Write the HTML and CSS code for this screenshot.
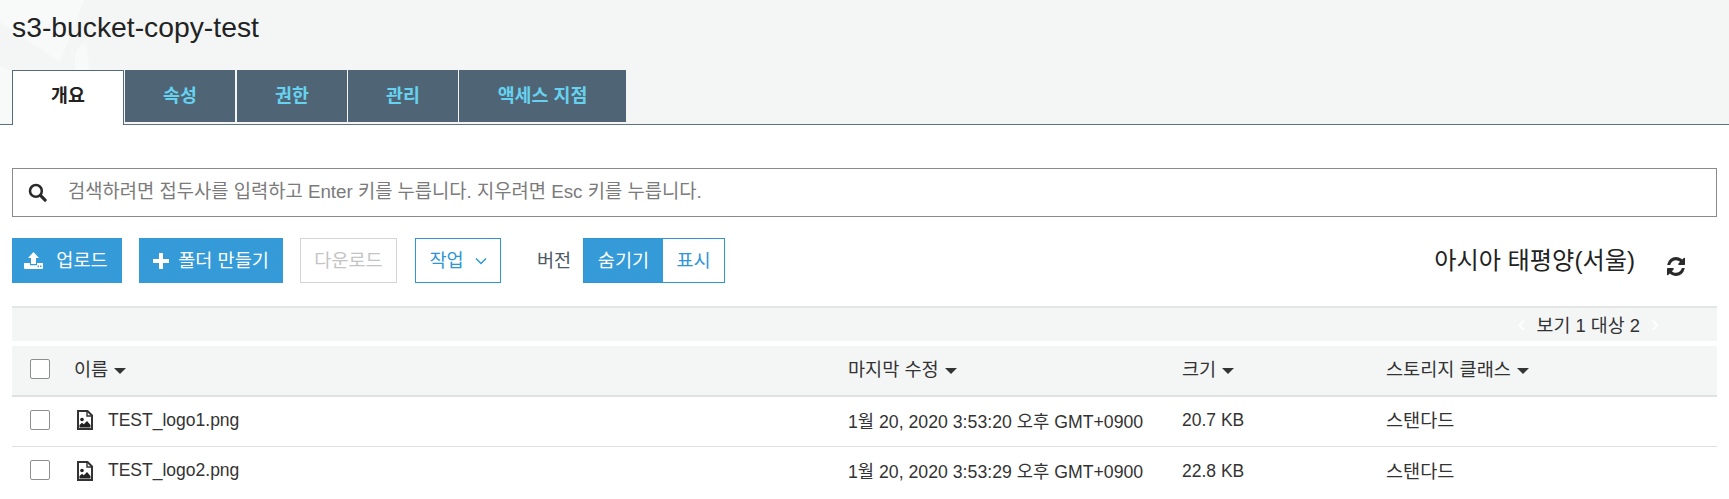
FILE: index.html
```html
<!DOCTYPE html>
<html lang="ko">
<head>
<meta charset="utf-8">
<title>s3-bucket-copy-test</title>
<link rel="stylesheet" href="styles.css">
</head>
<body>
<header class="head">
  <svg class="head-art" width="120" height="123" viewBox="0 0 120 123" aria-hidden="true"><path d="M0 0H84L60 62L0 22Z" fill="#f8fafa"/><path d="M75 123V62Q75 44 86 43Q92 66 84 123Z" fill="#f8fafa"/><path d="M0 66L40 84V123H0Z" fill="#f8fafa"/></svg>
  <h1 class="title">s3-bucket-copy-test</h1>
  <nav class="tabs">
    <a class="tab tab-active">개요</a>
    <a class="tab tab-second">속성</a>
    <a class="tab">권한</a>
    <a class="tab">관리</a>
    <a class="tab tab-wide">액세스 지점</a>
  </nav>
</header>
<main class="content">
  <div class="search">
    <svg class="search-icon" width="19" height="19" viewBox="0 0 18 18" aria-hidden="true"><circle cx="7.5" cy="7.5" r="5.6" fill="none" stroke="#2a2a2a" stroke-width="2.4"/><path d="M11.8 11.8L16.2 16.2" stroke="#2a2a2a" stroke-width="3" stroke-linecap="round"/></svg>
    <span class="search-text">검색하려면 접두사를 입력하고 Enter 키를 누릅니다. 지우려면 Esc 키를 누릅니다.</span>
  </div>
  <div class="toolbar">
    <button class="btn btn-primary btn-upload">
      <svg width="19" height="17" viewBox="0 0 19 17" aria-hidden="true"><path d="M9.5 0L15 6H12V12H7V6H4Z" fill="#fff"/><path d="M0 11H6V13.2H13V11H19V16Q19 17 18 17H1Q0 17 0 16Z" fill="#fff"/><path d="M13.6 13.6H15V15H13.6ZM16 13.6H17.4V15H16Z" fill="#349bd8"/></svg>
      <span>업로드</span>
    </button>
    <button class="btn btn-primary btn-folder">
      <svg width="16" height="16" viewBox="0 0 16 16" aria-hidden="true"><path d="M6 0H10V6H16V10H10V16H6V10H0V6H6Z" fill="#fff"/></svg>
      <span>폴더 만들기</span>
    </button>
    <button class="btn btn-disabled">다운로드</button>
    <button class="btn btn-outline btn-action">
      <span>작업</span>
      <svg width="12" height="8" viewBox="0 0 12 8" aria-hidden="true"><path d="M1 1.5L6 6.5L11 1.5" fill="none" stroke="#2f96d6" stroke-width="1.5"/></svg>
    </button>
    <span class="version-label">버전</span>
    <div class="segment">
      <span class="seg seg-on">숨기기</span>
      <span class="seg">표시</span>
    </div>
    <span class="region">아시아 태평양(서울)</span>
    <svg class="refresh" width="18" height="19" viewBox="0 0 1536 1536" preserveAspectRatio="none" aria-hidden="true"><path fill="#2a2a2a" d="M1511 928q0 5-1 7-64 268-268 434.5t-478 166.5q-146 0-282.5-55t-243.5-157l-129 129q-19 19-45 19t-45-19-19-45v-448q0-26 19-45t45-19h448q26 0 45 19t19 45-19 45l-137 137q71 66 161 102t187 36q134 0 250-65t186-179q11-17 53-117 8-23 30-23h192q13 0 22.5 9.5t9.5 22.5zm25-800v448q0 26-19 45t-45 19h-448q-26 0-45-19t-19-45 19-45l138-138q-148-137-349-137-134 0-250 65t-186 179q-11 17-53 117-8 23-30 23h-199q-13 0-22.5-9.5t-9.5-22.5v-7q65-268 270-434.5t480-166.5q146 0 284 55.5t245 156.5l130-129q19-19 45-19t45 19 19 45z"/></svg>
  </div>
  <div class="pager">
    <span class="pager-arrow">‹</span>
    <span>보기 1 대상 2</span>
    <span class="pager-arrow">›</span>
  </div>
  <div class="table">
    <div class="row row-head">
      <span class="check"></span>
      <span class="cell">이름<i class="caret"></i></span>
      <span class="cell">마지막 수정<i class="caret"></i></span>
      <span class="cell">크기<i class="caret"></i></span>
      <span class="cell">스토리지 클래스<i class="caret"></i></span>
    </div>
    <div class="row">
      <span class="check"></span>
      <span class="cell cell-name">
        <svg width="16" height="20" viewBox="0 0 16 20" aria-hidden="true"><path d="M1 1H10.5L15 5.5V19H1Z" fill="#fff" stroke="#333" stroke-width="2"/><path d="M10 1V6H15" fill="none" stroke="#333" stroke-width="1.4"/><circle cx="5" cy="9.5" r="1.8" fill="#222"/><path d="M2.5 17.5V15L5 12.8L6.8 14.2L10 11L13.5 15V17.5Z" fill="#222"/></svg>
        <span class="latin">TEST_logo1.png</span>
      </span>
      <span class="cell cell-date">1월 20, 2020 3:53:20 오후 GMT+0900</span>
      <span class="cell latin">20.7 KB</span>
      <span class="cell">스탠다드</span>
    </div>
    <div class="row">
      <span class="check"></span>
      <span class="cell cell-name">
        <svg width="16" height="20" viewBox="0 0 16 20" aria-hidden="true"><path d="M1 1H10.5L15 5.5V19H1Z" fill="#fff" stroke="#333" stroke-width="2"/><path d="M10 1V6H15" fill="none" stroke="#333" stroke-width="1.4"/><circle cx="5" cy="9.5" r="1.8" fill="#222"/><path d="M2.5 17.5V15L5 12.8L6.8 14.2L10 11L13.5 15V17.5Z" fill="#222"/></svg>
        <span class="latin">TEST_logo2.png</span>
      </span>
      <span class="cell cell-date">1월 20, 2020 3:53:29 오후 GMT+0900</span>
      <span class="cell latin">22.8 KB</span>
      <span class="cell">스탠다드</span>
    </div>
  </div>
</main>
</body>
</html>
```
FILE: styles.css
```css
* { box-sizing: border-box; }
html, body { margin: 0; height: 100%; overflow: hidden; }
body {
  background: #fff;
  color: #333;
  font-family: "Liberation Sans", "Noto Sans CJK KR", sans-serif;
  font-size: 18.6px;
}
.head {
  position: relative;
  height: 125px;
  padding: 11px 12px 0;
  background: #f4f6f6;
  border-bottom: 1px solid #5d7382;
}
.head-art { position: absolute; left: 0; top: 0; }
.title {
  position: relative;
  margin: 0;
  height: 32px;
  font-size: 28.3px;
  line-height: 32px;
  font-weight: 400;
  color: #222;
}
.tabs { position: relative; display: flex; gap: 1px; margin-top: 27px; height: 55px; }
.tab {
  width: 110px;
  height: 52px;
  padding-bottom: 5px;
  background: #4f6575;
  color: #66d2f0;
  font-weight: 700;
  font-size: 18.4px;
  display: flex;
  align-items: center;
  justify-content: center;
}
.tab-second { margin-right: 1px; }
.tab-wide { width: 167px; }
.tab-active {
  width: 112px;
  height: 55px;
  background: #fff;
  color: #222;
  border: 1px solid #546b7b;
  border-bottom: 0;
  padding-bottom: 8px;
}
.content { padding: 43px 12px 0; }
.search {
  height: 49px;
  border: 1px solid #8a8a8a;
  display: flex;
  align-items: center;
  padding-left: 15px;
  gap: 21px;
  color: #7b7b7b;
  font-size: 18.75px;
}
.search-text { padding-bottom: 6px; }
.toolbar { display: flex; align-items: center; height: 45px; margin-top: 21px; }
.btn {
  height: 45px;
  padding: 0;
  border: 1px solid transparent;
  background: #fff;
  font: inherit;
  display: flex;
  align-items: center;
  justify-content: center;
}
.btn span, .btn-disabled { padding-bottom: 5px; }
.btn-primary { background: #349bd8; color: #fff; }
.btn-upload { width: 110px; gap: 13px; margin-right: 17px; padding-right: 2px; }
.btn-folder { width: 144px; gap: 9px; margin-right: 17px; }
.btn-disabled { width: 97px; border-color: #d5d5d5; color: #c4c4c4; margin-right: 18px; }
.btn-outline { border-color: #2f96d6; color: #2f96d6; }
.btn-action { width: 86px; gap: 11px; margin-right: 36px; }
.version-label { color: #4a5a66; margin-right: 11px; width: 35px; padding-bottom: 5px; }
.segment { display: flex; height: 45px; border: 1px solid #2f96d6; }
.seg { width: 61px; padding-bottom: 5px; display: flex; align-items: center; justify-content: center; color: #2f96d6; }
.seg-on { width: 79px; background: #349bd8; color: #fff; }
.region { margin-left: auto; margin-right: 32px; font-size: 24.2px; color: #222; padding-bottom: 4px; }
.refresh { margin-right: 32px; margin-top: 12px; }
.pager {
  height: 35px;
  margin-top: 23px;
  background: #f4f6f6;
  border-top: 2px solid #e4e6e6;
  display: flex;
  align-items: center;
  justify-content: flex-end;
  gap: 11px;
  padding-right: 58px;
  font-size: 18.4px;
}
.pager span { padding-bottom: 2px; }
.pager-arrow { color: #fff; font-size: 24px; }
.table { margin-top: 5px; }
.row {
  display: grid;
  grid-template-columns: 62px 774px 334px 204px 1fr;
  align-items: center;
  height: 50px;
  border-bottom: 1px solid #e0e0e0;
}
.row:last-child { border-bottom: 0; }
.row-head { background: #f4f6f6; height: 51px; border-bottom: 2px solid #e0e2e2; }
.row-head .cell { padding-bottom: 7px; }
.check {
  width: 20px;
  height: 20px;
  margin: 0 0 4px 18px;
  background: #fff;
  border: 1px solid #8e8e8e;
  border-radius: 2px;
}
.cell { color: #333; padding-bottom: 6px; }
.cell-name { display: flex; align-items: center; gap: 15px; padding: 0 0 3px 3px; }
.cell-date { font-size: 17.7px; padding-bottom: 4px; }
.cell.latin { padding-bottom: 2px; }
.latin { font-size: 17.5px; }
.caret {
  display: inline-block;
  margin-left: 6px;
  border-style: solid;
  border-width: 6px 6px 0;
  border-color: #333 transparent transparent;
  vertical-align: 2px;
}
```
